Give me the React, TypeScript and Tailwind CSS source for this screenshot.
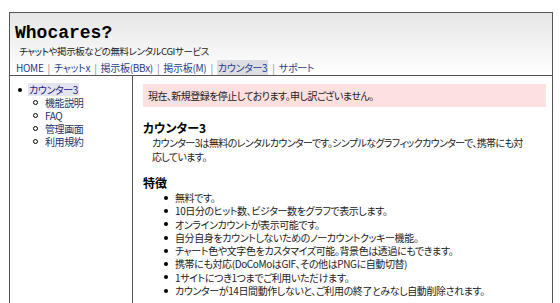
import React from "react";

const navItems = ["HOME", "チャットx", "掲示板(BBx)", "掲示板(M)", "カウンター3", "サポート"];

const subItems = ["機能説明", "FAQ", "管理画面", "利用規約"];

const features = [
  "無料です。",
  "10日分のヒット数、ビジター数をグラフで表示します。",
  "オンラインカウントが表示可能です。",
  "自分自身をカウントしないためのノーカウントクッキー機能。",
  "チャート色や文字色をカスタマイズ可能。背景色は透過にもできます。",
  "携帯にも対応(DoCoMoはGIF、その他はPNGに自動切替)",
  "1サイトにつき1つまでご利用いただけます。",
  "カウンターが14日間動作しないと、ご利用の終了とみなし自動削除されます。",
];

const jp = "font-['Noto_Sans_CJK_JP',sans-serif] [font-feature-settings:'palt']";

export default function App() {
  return (
    <div className="w-[560px] h-[303px] overflow-hidden bg-white pl-[9px] pr-[7px] pt-[12px]">
      <div className="h-full border-x border-t border-[#555] flex flex-col">
        {/* header */}
        <div className="h-[63px] border-b border-[#555] bg-gradient-to-b from-[#e6e6e6] to-white pl-[5px] pt-[10px]">
          <div className="font-['Liberation_Mono',monospace] font-bold text-[18px] leading-[20px] text-black">
            Whocares?
          </div>
          <div className={`${jp} text-[9.5px] tracking-[-0.4px] leading-[14px] text-[#222] pl-[4px] mt-[1px]`}>
            チャットや掲示板などの無料レンタルCGIサービス
          </div>
          <div className={`${jp} text-[10px] tracking-[-0.3px] leading-[15px] text-[#1d3d8f] pl-[1px] mt-[2px] flex items-center`}>
            {navItems.map((item, i) => (
              <React.Fragment key={item}>
                {i > 0 && <span className="text-[#888] px-[4px]">|</span>}
                <span className={item === "カウンター3" ? "bg-[#dddde4] px-[1px]" : ""}>{item}</span>
              </React.Fragment>
            ))}
          </div>
        </div>

        {/* body */}
        <div className="flex flex-1">
          <div className={`w-[123px] border-r border-[#555] pt-[7px] pl-[8px] ${jp} text-[10px] tracking-[-0.4px] leading-[13px]`}>
            <div className="flex items-center">
              <span className="w-[4px] h-[4px] rounded-full bg-black mr-[6px]"></span>
              <span className="bg-[#e4e4ee] text-[#1d1d8a] px-[1px]">カウンター3</span>
            </div>
            <ul className="pl-[15px]">
              {subItems.map((s) => (
                <li key={s} className="flex items-center">
                  <span className="w-[5px] h-[5px] rounded-full border border-black mr-[7px]"></span>
                  <span className="text-[#22336b]">{s}</span>
                </li>
              ))}
            </ul>
          </div>

          <div className={`flex-1 pt-[8px] pl-[10px] pr-[6px] ${jp} text-[#222]`}>
            <div className="h-[23px] bg-[#fde0e0] flex items-center pl-[5px] text-[10px] tracking-[-0.55px]">
              現在、新規登録を停止しております。申し訳ございません。
            </div>
            <h2 className="mt-[13px] font-bold text-[12px] leading-[16px] text-black">カウンター3</h2>
            <p className="pl-[9px] text-[10px] tracking-[-0.62px] leading-[14px] whitespace-nowrap">
              カウンター3は無料のレンタルカウンターです。シンプルなグラフィックカウンターで、携帯にも対
              <br />
              応しています。
            </p>
            <h2 className="mt-[11px] font-bold text-[12px] leading-[16px] text-black">特徴</h2>
            <ul className="pl-[21px] text-[10px] tracking-[-0.4px] leading-[13.3px]">
              {features.map((f) => (
                <li key={f} className="flex items-center h-[13.3px]">
                  <span className="w-[4px] h-[4px] rounded-full bg-black mr-[7px] shrink-0"></span>
                  <span>{f}</span>
                </li>
              ))}
            </ul>
          </div>
        </div>
      </div>
    </div>
  );
}
